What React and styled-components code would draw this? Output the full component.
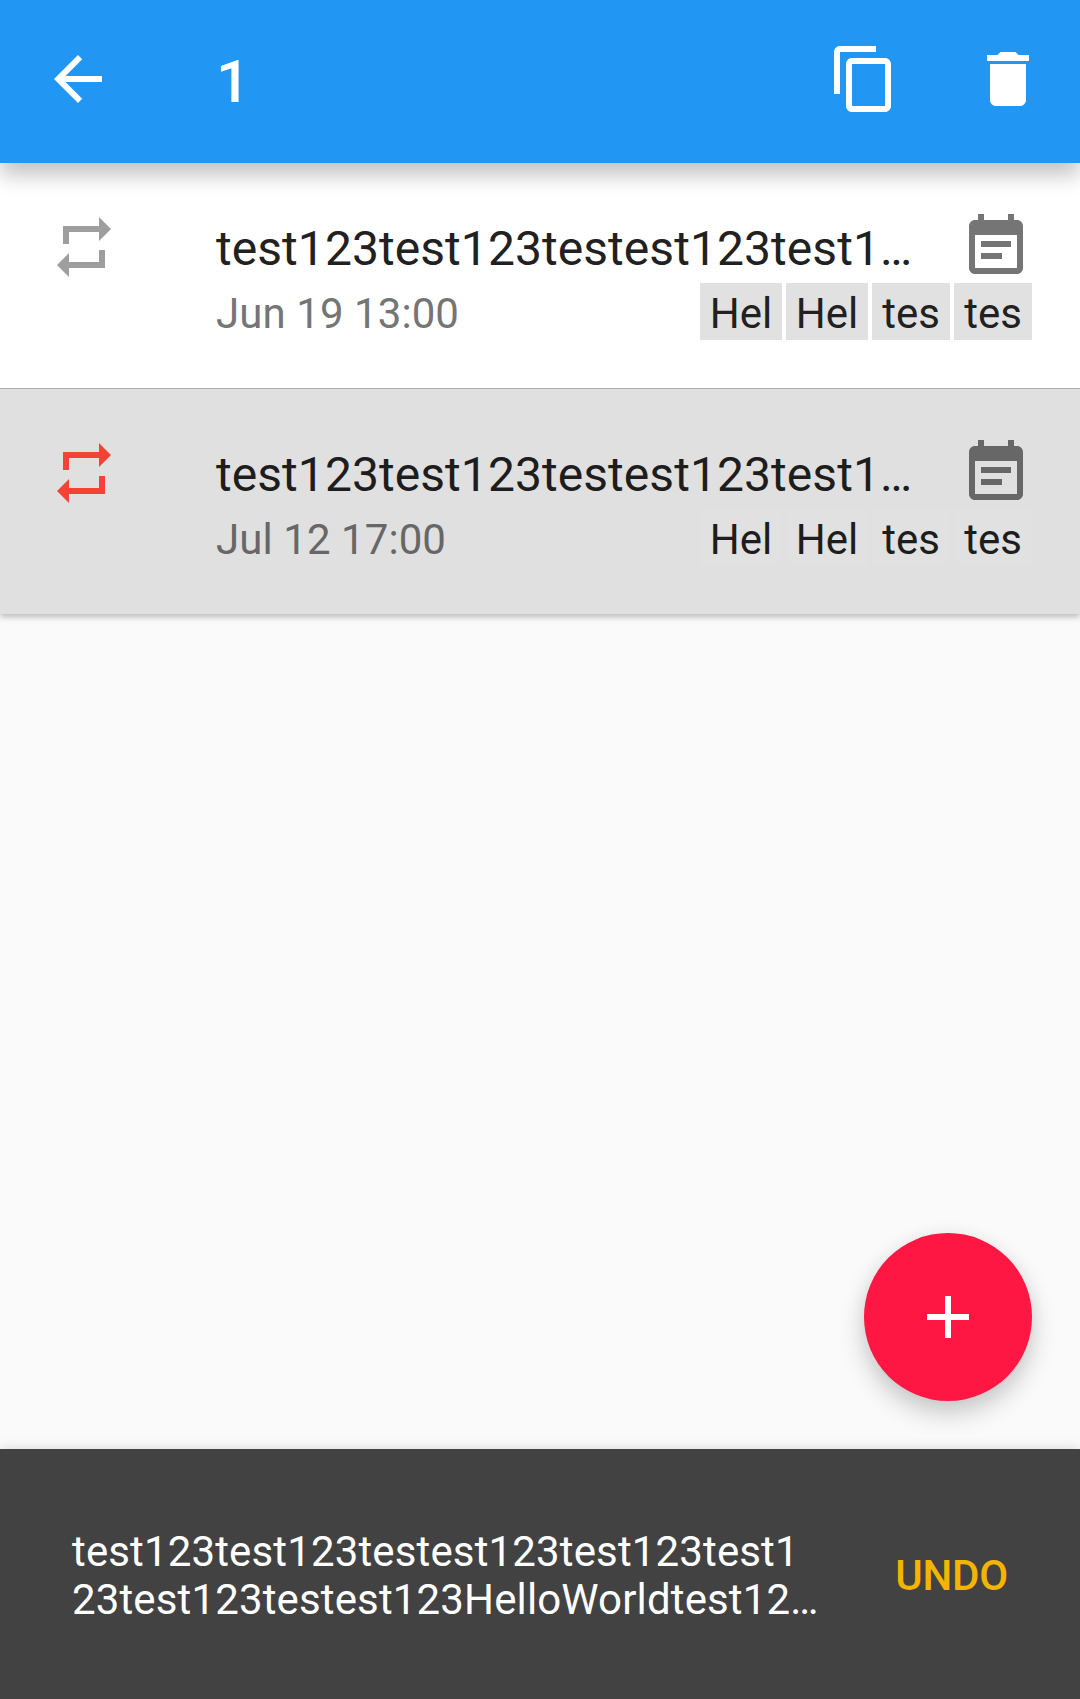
import React from "react";
import styled, { createGlobalStyle } from "styled-components";

const GlobalStyle = createGlobalStyle`
  * { box-sizing: border-box; }
  body { margin: 0; background: #fafafa; font-family: Roboto, sans-serif; }
`;

const Screen = styled.div`
  position: relative;
  display: flex;
  flex-direction: column;
  width: 1080px;
  height: 1699px;
  overflow: hidden;
  background: #fafafa;
`;

const AppBar = styled.header`
  position: relative;
  z-index: 1;
  display: flex;
  align-items: center;
  flex: none;
  height: 163px;
  padding: 0 36px 5px 42px;
  background: #2196f3;
  color: #fff;
  box-shadow: 0 12px 20px rgba(0, 0, 0, 0.24);
`;

const Count = styled.h1`
  flex: 1;
  margin: 6px 0 0 102px;
  font-size: 60px;
  line-height: 70px;
  font-weight: 500;
`;

const Actions = styled.div`
  display: flex;
  gap: 72px;
`;

const Icon = styled.svg`
  display: block;
  flex: none;
  width: 72px;
  height: 72px;
  fill: currentColor;
`;

const List = styled.main`
  display: flex;
  flex-direction: column;
  gap: 1px;
  background: #acacac;
  box-shadow: 0 3px 6px rgba(0, 0, 0, 0.25);
`;

const Item = styled.article`
  display: flex;
  height: 225px;
  padding: 48px 48px 0;
  background: ${(p) => (p.$selected ? "#e0e0e0" : "#fff")};
  --title: ${(p) => (p.$selected ? "#1d1d1d" : "#212121")};
  --muted: ${(p) => (p.$selected ? "#676767" : "#757575")};
`;

const RepeatMark = styled.div`
  width: 168px;
  color: ${(p) => (p.$active ? "#f44336" : "#9e9e9e")};
`;

const Content = styled.div`
  flex: 1;
  min-width: 0;
`;

const Line = styled.div`
  display: flex;
  justify-content: space-between;
  height: ${(p) => p.$height}px;
  color: var(--muted);
`;

const Title = styled.h2`
  margin: 10px 0 0;
  white-space: nowrap;
  font-size: 48px;
  line-height: 56px;
  font-weight: 400;
  letter-spacing: 0.06px;
  color: var(--title);
`;

const When = styled.time`
  font-size: 42px;
  line-height: 61px;
  letter-spacing: 0.07px;
`;

const Chips = styled.div`
  display: flex;
  gap: 4px;
`;

const Chip = styled.span`
  width: ${(p) => p.$width}px;
  height: 57px;
  background: #e1e1e1;
  color: var(--title);
  font-size: 42px;
  line-height: 61px;
  text-align: center;
`;

const Fab = styled.button`
  position: absolute;
  right: 48px;
  bottom: 298px;
  display: flex;
  align-items: center;
  justify-content: center;
  width: 168px;
  height: 168px;
  padding: 0;
  border: 0;
  border-radius: 50%;
  background: #ff1744;
  color: #fff;
  box-shadow: 0 12px 26px rgba(0, 0, 0, 0.2), 0 2px 18px rgba(0, 0, 0, 0.04);
`;

const Snackbar = styled.footer`
  display: flex;
  align-items: center;
  justify-content: space-between;
  height: 250px;
  margin-top: auto;
  padding: 3px 72px 0;
  background: #424242;
  color: #fff;
  font-size: 42px;
  line-height: 48px;
  box-shadow: 0 0 12px rgba(0, 0, 0, 0.15);
`;

const Message = styled.p`
  margin: 0;
  white-space: nowrap;
  letter-spacing: 0.14px;
`;

const Undo = styled.button`
  padding: 0;
  border: 0;
  background: none;
  color: #f4b400;
  font: 500 42px/49px Roboto, sans-serif;
  letter-spacing: -0.2px;
`;

const paths = {
  back: "M20 11H7.83l5.59-5.59L12 4l-8 8 8 8 1.41-1.41L7.83 13H20v-2z",
  copy: "M16 1H4c-1.1 0-2 .9-2 2v14h2V3h12V1zm3 4H8c-1.1 0-2 .9-2 2v14c0 1.1.9 2 2 2h11c1.1 0 2-.9 2-2V7c0-1.1-.9-2-2-2zm0 16H8V7h11v14z",
  trash: "M6 19c0 1.1.9 2 2 2h8c1.1 0 2-.9 2-2V7H6v12zM19 4h-3.5l-1-1h-5l-1 1H5v2h14V4z",
  repeat: "M7 7h10v3l4-4-4-4v3H5v6h2V7zm10 10H7v-3l-4 4 4 4v-3h12v-6h-2v4z",
  note: "M17 10H7v2h10v-2zm2-7h-1V1h-2v2H8V1H6v2H5c-1.11 0-1.99.9-1.99 2L3 19c0 1.1.89 2 2 2h14c1.1 0 2-.9 2-2V5c0-1.1-.9-2-2-2zm0 16H5V8h14v11zm-5-5H7v2h7v-2z",
  add: "M19 13h-6v6h-2v-6H5v-2h6V5h2v6h6v2z",
};

const Glyph = ({ name }) => (
  <Icon viewBox="0 0 24 24" aria-hidden="true">
    <path d={paths[name]} />
  </Icon>
);

const notes = [
  { title: "test123test123testest123test1…", when: "Jun 19 13:00", selected: false },
  { title: "test123test123testest123test1…", when: "Jul 12 17:00", selected: true },
];

const tags = [
  { label: "Hel", width: 82 },
  { label: "Hel", width: 82 },
  { label: "tes", width: 78 },
  { label: "tes", width: 78 },
];

export default function App() {
  return (
    <Screen>
      <GlobalStyle />
      <AppBar>
        <Glyph name="back" />
        <Count>1</Count>
        <Actions>
          <Glyph name="copy" />
          <Glyph name="trash" />
        </Actions>
      </AppBar>
      <List>
        {notes.map((note) => (
          <Item key={note.when} $selected={note.selected}>
            <RepeatMark $active={note.selected}>
              <Glyph name="repeat" />
            </RepeatMark>
            <Content>
              <Line $height={72}>
                <Title>{note.title}</Title>
                <Glyph name="note" />
              </Line>
              <Line $height={57}>
                <When>{note.when}</When>
                <Chips>
                  {tags.map((tag, i) => (
                    <Chip key={i} $width={tag.width}>
                      {tag.label}
                    </Chip>
                  ))}
                </Chips>
              </Line>
            </Content>
          </Item>
        ))}
      </List>
      <Fab aria-label="Add">
        <Glyph name="add" />
      </Fab>
      <Snackbar>
        <Message>
          test123test123testest123test123test1
          <br />
          23test123testest123HelloWorldtest12…
        </Message>
        <Undo>UNDO</Undo>
      </Snackbar>
    </Screen>
  );
}
